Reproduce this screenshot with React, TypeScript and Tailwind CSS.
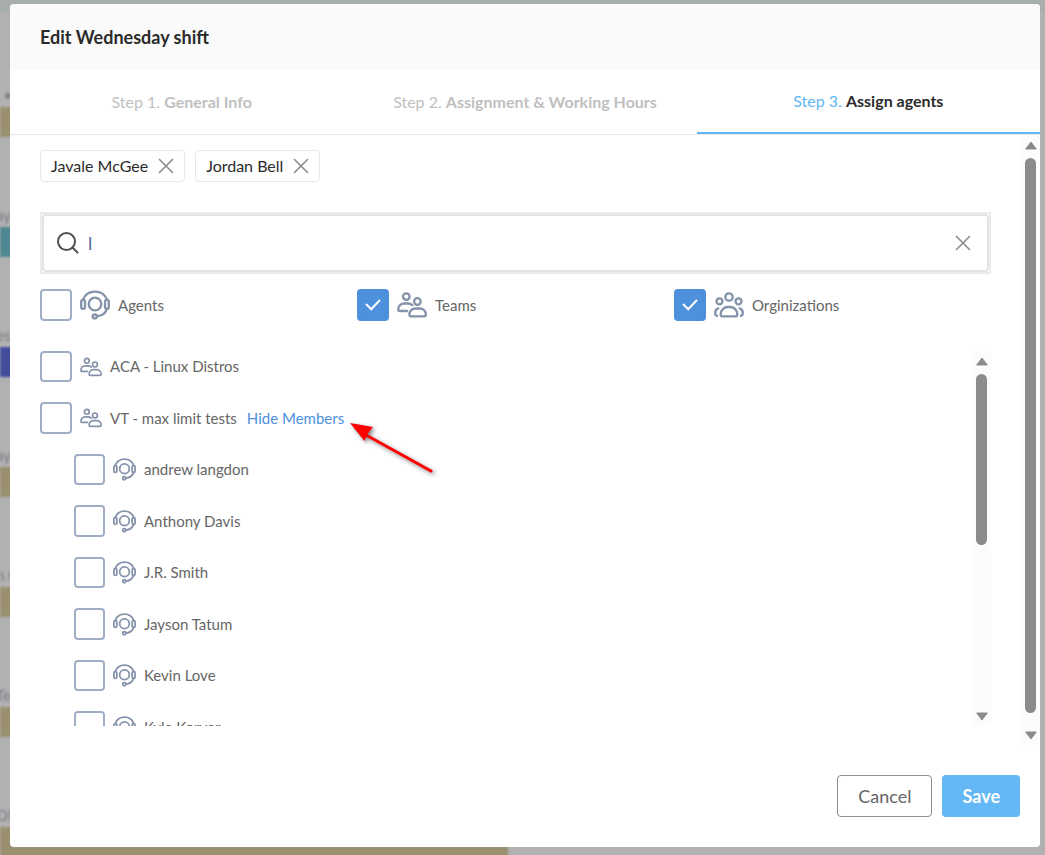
import React, { useState } from 'react';

interface Row {
  label: string;
  type: 'team' | 'agent';
  action?: string;
}

const rows: Row[] = [
  { label: 'ACA - Linux Distros', type: 'team' },
  { label: 'VT - max limit tests', type: 'team', action: 'Hide Members' },
  { label: 'andrew langdon', type: 'agent' },
  { label: 'Anthony Davis', type: 'agent' },
  { label: 'J.R. Smith', type: 'agent' },
  { label: 'Jayson Tatum', type: 'agent' },
  { label: 'Kevin Love', type: 'agent' },
  { label: 'Kyle Korver', type: 'agent' },
];

const shifts = [
  { label: '. •', color: 'bg-[#9a9070]' },
  { label: 'ay', color: 'bg-[#4f8892]' },
  { label: 'es', color: 'bg-[#434d9c]' },
  { label: 'ay', color: 'bg-[#9a9070]' },
  { label: 'n C', color: 'bg-[#9a9070]' },
  { label: 'Te', color: 'bg-[#9a9070]' },
  { label: 'ON', color: 'bg-[#9a9070]' },
];

function AgentIcon({ className }: { className: string }) {
  return (
    <svg viewBox="0 0 30 30" fill="none" stroke="currentColor" strokeWidth={2.3} strokeLinecap="round" className={className} aria-hidden="true">
      <circle cx="15" cy="14" r="6.300" />
      <rect x="1.200" y="9.800" width="3.800" height="9" rx="1.900" />
      <rect x="25" y="9.800" width="3.800" height="9" rx="1.900" />
      <path d="M3 9.600C4.800 4.900 9.400 1.600 15 1.600s10.200 3.300 12 8" />
      <path d="M27 18.800c-1.400 4-5.200 7-10 7.300" />
      <circle cx="14.700" cy="26.400" r="2" />
    </svg>
  );
}

function TeamIcon({ className }: { className: string }) {
  return (
    <svg viewBox="0 0 30 26" fill="none" stroke="currentColor" strokeWidth={2.3} strokeLinecap="round" strokeLinejoin="round" className={className} aria-hidden="true">
      <circle cx="9.300" cy="4.600" r="3.300" />
      <circle cx="20.400" cy="9.500" r="3.300" />
      <path d="M10 19H2.500c-.8 0-1.300-.5-1.300-1.300 0-3.700 2.500-6.200 6-6.200h3.600c1.800 0 3.300.5 4.500 1.600" />
      <path d="M12.400 22.500c0-3.500 2.800-6 6.100-6h4.200c3.400 0 6.100 2.500 6.100 6 0 1.200-.6 1.900-1.700 1.900h-13c-1.100 0-1.700-.7-1.700-1.900z" />
    </svg>
  );
}

function OrganizationIcon({ className }: { className: string }) {
  return (
    <svg viewBox="0 0 30 26" fill="none" stroke="currentColor" strokeWidth={2.3} strokeLinecap="round" strokeLinejoin="round" className={className} aria-hidden="true">
      <circle cx="15" cy="5" r="3.700" />
      <circle cx="5.500" cy="9.300" r="3" />
      <circle cx="24.500" cy="9.300" r="3" />
      <path d="M6.700 22.200c0-4 3.200-7.200 7.100-7.200h2.400c3.900 0 7.100 3.200 7.100 7.200 0 1.400-.8 2.200-2 2.200H8.700c-1.200 0-2-.8-2-2.200z" />
      <path d="M4.300 16.400c-2 .6-3.100 2.500-3.100 4.800 0 1.400.8 2.400 2 2.600" />
      <path d="M25.700 16.400c2 .6 3.100 2.500 3.100 4.800 0 1.400-.8 2.400-2 2.600" />
    </svg>
  );
}

function CloseIcon() {
  return (
    <svg viewBox="0 0 16 16" fill="none" stroke="currentColor" strokeWidth={1.7} strokeLinecap="round" className="size-4" aria-hidden="true">
      <path d="M1.500 1.500l13 13M14.500 1.500l-13 13" />
    </svg>
  );
}

function Checkbox({ id, checked, onChange, compact = false }: { id: string; checked: boolean; onChange: () => void; compact?: boolean }) {
  return (
    <span className={`grid h-full shrink-0 place-items-center ${compact ? 'w-[31px]' : 'w-8'}`}>
      <input
        id={id}
        type="checkbox"
        checked={checked}
        onChange={onChange}
        className="peer col-start-1 row-start-1 h-full w-full appearance-none rounded-sm border-2 border-[#a0aec5] bg-white checked:border-[#4d90db] checked:bg-[#4d90db]"
      />
      <svg viewBox="0 0 16 12" fill="none" stroke="white" strokeWidth={2} strokeLinecap="round" className="pointer-events-none invisible col-start-1 row-start-1 h-3 w-4 peer-checked:visible" aria-hidden="true">
        <path d="M1.500 5.500l4.700 4.700 8.300-8.700" />
      </svg>
    </span>
  );
}

function Scrollbar({ children }: { children: React.ReactNode }) {
  return (
    <div className="flex w-[19px] shrink-0 flex-col items-center gap-2 bg-[#fcfcfc] pt-[6px] pb-[5px] text-[#8b8b8b]" aria-hidden="true">
      <svg viewBox="0 0 12 9" fill="currentColor" stroke="currentColor" strokeLinejoin="round" className="h-[9px] w-3 shrink-0">
        <path d="M6 1L11.300 8H.7z" />
      </svg>
      <div className="flex w-[11px] flex-1 flex-col">{children}</div>
      <svg viewBox="0 0 12 9" fill="currentColor" stroke="currentColor" strokeLinejoin="round" className="h-[9px] w-3 shrink-0">
        <path d="M6 8L11.300 1H.7z" />
      </svg>
    </div>
  );
}

function Chip({ name }: { name: string }) {
  return (
    <li className="flex h-8 items-center gap-[10px] rounded-sm border border-[#e8e8e8] px-[10px] text-base text-[#2b2b2b]">
      {name}
      <button type="button" aria-label={`Remove ${name}`} className="text-[#8f8f8f]">
        <CloseIcon />
      </button>
    </li>
  );
}

function Schedule() {
  return (
    <div className="h-full overflow-hidden bg-[#b1b1b1]" aria-hidden="true">
      <div className="h-3 bg-[#a8adad]" />
      <div className="flex flex-col pt-[65px] blur-[1px]">
        {shifts.map((shift, index) => (
          <div key={index} className="h-[120px] pt-2">
            <div className="-ml-1 h-[22px] text-[15px] leading-5 text-[#7b7d88]">{shift.label}</div>
            <div className={`h-[30px] w-[508px] ${shift.color}`} />
          </div>
        ))}
      </div>
    </div>
  );
}

export default function App() {
  const [query, setQuery] = useState('l');
  const [filters, setFilters] = useState({ agents: false, teams: true, organizations: true });
  const [selected, setSelected] = useState<string[]>([]);

  const toggleFilter = (key: keyof typeof filters) => setFilters({ ...filters, [key]: !filters[key] });
  const toggleRow = (label: string) =>
    setSelected(selected.includes(label) ? selected.filter((item) => item !== label) : [...selected, label]);

  return (
    <div className="relative h-screen overflow-hidden font-['Lato',sans-serif]">
      <Schedule />

      <div className="absolute inset-0 flex pt-1 pr-[5px] pb-2 pl-[10px]">
        <div role="dialog" aria-labelledby="dialog-title" className="flex flex-1 flex-col overflow-hidden rounded-sm bg-white">
          <header className="flex h-[66px] shrink-0 items-center bg-[#fafafa] px-[30px]">
            <h1 id="dialog-title" className="text-lg font-bold text-[#2b2b2b]">Edit Wednesday shift</h1>
          </header>

          <nav className="grid h-[65px] shrink-0 grid-cols-3 border-b border-[#e8e8e8] text-base text-[#bfbfbf]">
            <button type="button">
              Step 1. <b>General Info</b>
            </button>
            <button type="button">
              Step 2. <b>Assignment &amp; Working Hours</b>
            </button>
            <button type="button" aria-current="step" className="border-b-2 border-[#62b6f5] text-[#62b6f5]">
              Step 3. <b className="text-[#2b2b2b]">Assign agents</b>
            </button>
          </nav>

          <div className="flex min-h-0 flex-1">
            <div className="min-w-0 flex-1 px-[30px] pt-[15px]">
              <ul className="flex gap-[10px]">
                <Chip name="Javale McGee" />
                <Chip name="Jordan Bell" />
              </ul>

              <div className="mt-[30px] border-2 border-[#ebebeb]">
                <div className="flex h-[58px] items-center rounded-sm border-2 border-[#e3e3e3] px-3">
                  <svg viewBox="0 0 24 24" fill="none" stroke="#505050" strokeWidth={2} strokeLinecap="round" className="size-6 shrink-0" aria-hidden="true">
                    <circle cx="10.500" cy="10.500" r="8.500" />
                    <path d="M16.500 16.500l5 5" />
                  </svg>
                  <input
                    type="text"
                    aria-label="Search"
                    value={query}
                    onChange={(e) => setQuery(e.target.value)}
                    className="min-w-0 flex-1 px-2 text-lg text-[#4f6a9c] outline-none"
                  />
                  <button type="button" aria-label="Clear search" onClick={() => setQuery('')} className="px-1 text-[#8f8f8f]">
                    <CloseIcon />
                  </button>
                </div>
              </div>

              <div className="mt-[15px] grid grid-cols-3 text-[15px] text-[#666]">
                <label htmlFor="filter-agents" className="flex h-8 items-center gap-2">
                  <Checkbox id="filter-agents" checked={filters.agents} onChange={() => toggleFilter('agents')} />
                  <AgentIcon className="size-[30px] text-[#8492aa]" />
                  Agents
                </label>
                <label htmlFor="filter-teams" className="flex h-8 items-center gap-2">
                  <Checkbox id="filter-teams" checked={filters.teams} onChange={() => toggleFilter('teams')} />
                  <TeamIcon className="h-[26px] w-[30px] text-[#8492aa]" />
                  Teams
                </label>
                <label htmlFor="filter-organizations" className="flex h-8 items-center gap-2">
                  <Checkbox id="filter-organizations" checked={filters.organizations} onChange={() => toggleFilter('organizations')} />
                  <OrganizationIcon className="h-[26px] w-[30px] text-[#8492aa]" />
                  Orginizations
                </label>
              </div>

              <div className="mt-[30px] flex h-[375px]">
                <ul className="flex min-w-0 flex-1 flex-col gap-5 overflow-hidden text-[15px] text-[#666]">
                  {rows.map((row, index) => (
                    <li key={row.label} className={`flex shrink-0 items-center gap-[10px] odd:h-[31px] even:h-8 ${row.type === 'agent' ? 'pl-[34px]' : ''}`}>
                      <label htmlFor={`row-${index}`} className="flex h-full items-center gap-2">
                        <Checkbox
                          id={`row-${index}`}
                          compact={row.type === 'agent'}
                          checked={selected.includes(row.label)}
                          onChange={() => toggleRow(row.label)}
                        />
                        {row.type === 'agent' ? (
                          <AgentIcon className="size-[23px] text-[#8492aa]" />
                        ) : (
                          <TeamIcon className="h-5 w-[22px] text-[#8492aa]" />
                        )}
                        {row.label}
                      </label>
                      {row.action && (
                        <span className="relative">
                          <button type="button" className="text-[#4d90db]">{row.action}</button>
                          {/* Pointer drawn over the list */}
                          <svg viewBox="0 0 92 60" className="pointer-events-none absolute top-[14px] left-full h-[60px] w-[92px] drop-shadow-[2px_2px_2px_rgba(0,0,0,0.5)]" aria-hidden="true">
                            <path d="M22 14L87 50" stroke="#fe0000" strokeWidth={3} strokeLinecap="round" />
                            <path d="M6 2L29 6 23 13.500 20.500 20z" fill="#fe0000" />
                          </svg>
                        </span>
                      )}
                    </li>
                  ))}
                </ul>
                <Scrollbar>
                  <div className="h-[171px] rounded-full bg-[#8b8b8b]" />
                </Scrollbar>
              </div>
            </div>
            <Scrollbar>
              <div className="mb-[10px] flex-1 rounded-full bg-[#8b8b8b]" />
            </Scrollbar>
          </div>

          <footer className="flex shrink-0 justify-end gap-[10px] px-5 py-[30px] text-lg">
            <button type="button" className="h-[42px] rounded-sm border border-[#8f8f8f] px-5 text-[#666]">Cancel</button>
            <button type="button" className="h-[42px] rounded-sm bg-[#64b8f6] px-5 font-bold text-white">Save</button>
          </footer>
        </div>
      </div>
    </div>
  );
}
